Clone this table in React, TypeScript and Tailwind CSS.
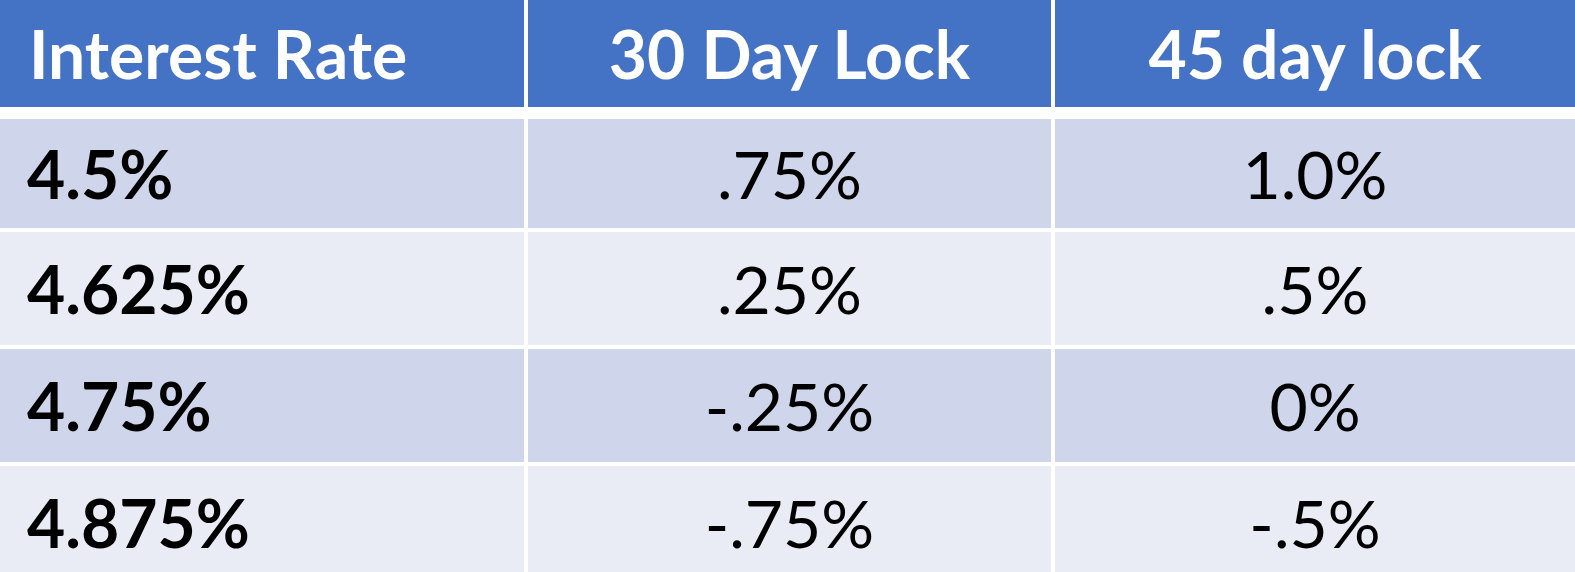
const rows = [
  { rate: '4.5%', d30: '.75%', d45: '1.0%', tone: 'bg-[#cfd5ea]', h: 'h-[109px]' },
  { rate: '4.625%', d30: '.25%', d45: '.5%', tone: 'bg-[#e9ebf5]', h: 'h-[113px]' },
  { rate: '4.75%', d30: '-.25%', d45: '0%', tone: 'bg-[#cfd5ea]', h: 'h-[113px]' },
  { rate: '4.875%', d30: '-.75%', d45: '-.5%', tone: 'bg-[#e9ebf5]', h: 'h-[113px]' },
];

const font = { fontFamily: 'Lato, "Open Sans", sans-serif' };

const App = () => {
  return (
    <div className="w-[1575px] h-[572px] overflow-hidden bg-white text-[66px] leading-none" style={font}>
      <div className="grid grid-cols-[524px_523px_1fr] gap-x-[4px] h-[107px] mb-[12px]">
        <div className="bg-[#4472c4] flex items-center pl-[29px] text-white font-bold">Interest Rate</div>
        <div className="bg-[#4472c4] flex items-center justify-center text-white font-bold">30 Day Lock</div>
        <div className="bg-[#4472c4] flex items-center justify-center text-white font-bold">45 day lock</div>
      </div>
      <div className="flex flex-col gap-y-[4px]">
        {rows.map((row) => (
          <div key={row.rate} className={`grid grid-cols-[524px_523px_1fr] gap-x-[4px] ${row.h}`}>
            <div className={`${row.tone} flex items-center pl-[27px] font-bold text-black`}>{row.rate}</div>
            <div className={`${row.tone} flex items-center justify-center text-black`}>{row.d30}</div>
            <div className={`${row.tone} flex items-center justify-center text-black`}>{row.d45}</div>
          </div>
        ))}
      </div>
    </div>
  );
};

export default App;
